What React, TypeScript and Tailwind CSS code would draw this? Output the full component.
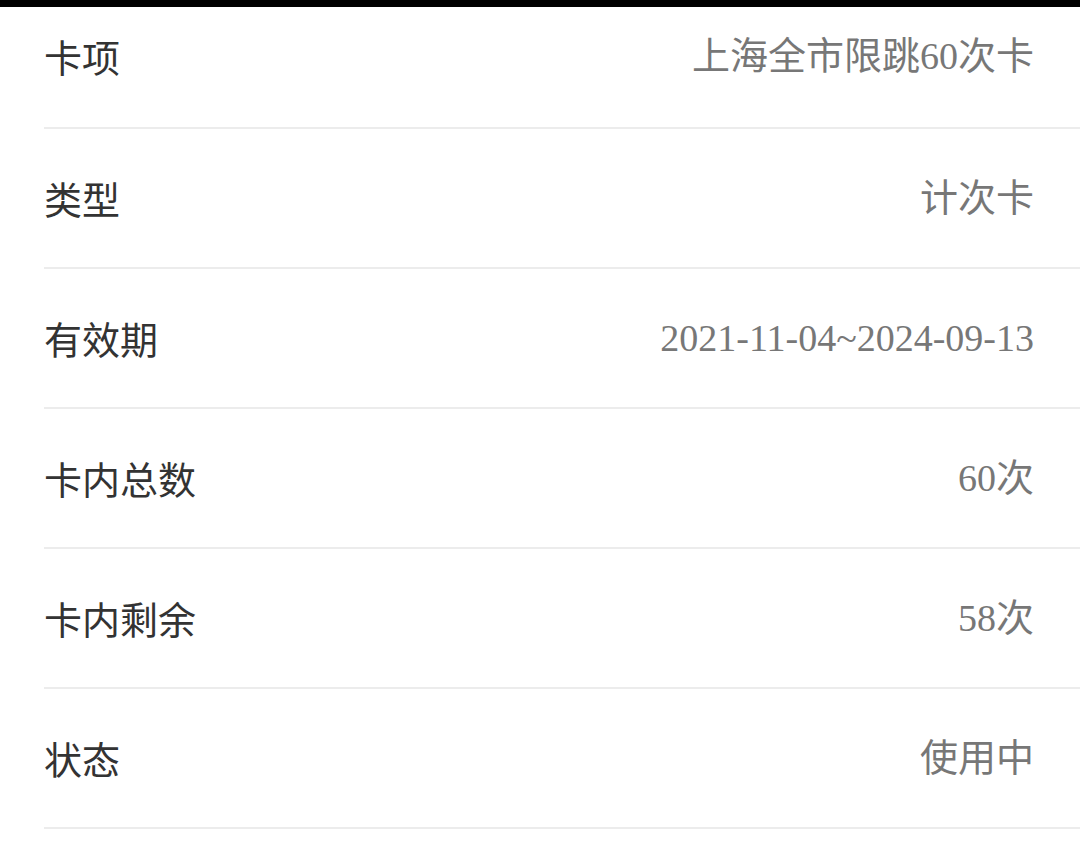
import React from 'react';

interface InfoRow {
  label: string;
  value: string;
}

const rows: InfoRow[] = [
  { label: '卡项', value: '上海全市限跳60次卡' },
  { label: '类型', value: '计次卡' },
  { label: '有效期', value: '2021-11-04~2024-09-13' },
  { label: '卡内总数', value: '60次' },
  { label: '卡内剩余', value: '58次' },
  { label: '状态', value: '使用中' },
];

export default function App() {
  return (
    <div className="w-[1080px] h-[860px] bg-white overflow-hidden">
      {/* 顶部状态栏 */}
      <div className="h-[7px] bg-black" />

      <div className="pl-[44px]">
        {rows.map((row, i) => (
          <div
            key={row.label}
            className={
              i === 0
                ? 'flex items-center justify-between h-[122px] pb-[22px] pr-[46px] border-b-2 border-[#ececec]'
                : 'flex items-center justify-between h-[140px] pr-[46px] border-b-2 border-[#ececec]'
            }
          >
            <span className="text-[38px] leading-none text-[#333333] font-['Noto_Sans_CJK_SC',sans-serif]">
              {row.label}
            </span>
            <span className="text-[38px] leading-none text-[#777777] font-['Liberation_Serif','Noto_Sans_CJK_SC',serif]">
              {row.value}
            </span>
          </div>
        ))}
      </div>
    </div>
  );
}
